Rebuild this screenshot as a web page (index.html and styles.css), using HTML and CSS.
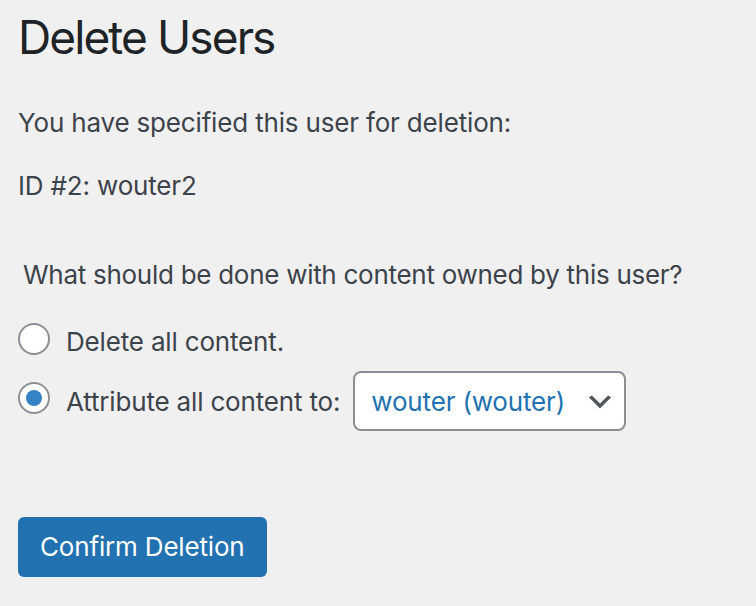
FILE: index.html
```html
<!DOCTYPE html>
<html lang="en">
<head>
<meta charset="utf-8">
<title>Delete Users</title>
<link rel="stylesheet" href="styles.css">
</head>
<body>
<div class="wrap">
  <h1 class="title">Delete Users</h1>
  <p class="intro">You have specified this user for deletion:</p>
  <p class="user-id">ID #2: wouter2</p>
  <fieldset class="options">
    <legend class="question">What should be done with content owned by this user?</legend>
    <div class="option">
      <span class="radio"></span>
      <span class="option-label">Delete all content.</span>
    </div>
    <div class="option option-select">
      <span class="radio radio-checked"></span>
      <span class="option-label">Attribute all content to:</span>
      <span class="select-wrap">
        <span class="select">wouter (wouter)</span>
        <svg class="chevron" viewBox="0 0 20 20" width="32" height="32" aria-hidden="true"><path d="M5 6l5 5 5-5 2 1-7 7-7-7 2-1z" fill="#50575e"/></svg>
      </span>
    </div>
  </fieldset>
  <button class="button-primary" type="button">Confirm Deletion</button>
</div>
</body>
</html>
```
FILE: styles.css
```css
html, body {
  margin: 0;
  padding: 0;
  background: #f0f0f1;
}
body {
  font-family: Inter, "Liberation Sans", Arial, sans-serif;
  font-size: 26px;
  line-height: 39px;
  letter-spacing: -0.17px;
  color: #3c434a;
}
.wrap {
  padding: 7px 18px 0 18px;
}
.title {
  margin: 0;
  font-size: 46px;
  line-height: 60px;
  font-weight: 400;
  letter-spacing: -1.9px;
  color: #1d2327;
}
.intro {
  margin: 36px 0 0 0;
}
.user-id {
  margin: 24px 0 0 0;
}
.options {
  margin: 50px 0 0 0;
  padding: 0;
  border: 0;
  min-width: 0;
}
.question {
  padding: 0 5px;
  margin-bottom: 28px;
  letter-spacing: -0.28px;
}
.option {
  display: flex;
  align-items: center;
  height: 39px;
}
.option-select {
  height: 60px;
  margin-top: 10px;
}
.radio {
  box-sizing: border-box;
  width: 32px;
  height: 32px;
  border: 2px solid #8c8f94;
  border-radius: 50%;
  background: #fff;
  margin: -6px 16px 0 0;
  display: flex;
  align-items: center;
  justify-content: center;
  flex: none;
}
.radio-checked::before {
  content: "";
  width: 16px;
  height: 16px;
  border-radius: 50%;
  background: #3582c4;
}
.select-wrap {
  position: relative;
  margin-left: 13px;
  display: block;
}
.select {
  box-sizing: border-box;
  display: flex;
  align-items: center;
  height: 60px;
  width: 273px;
  padding: 0 48px 0 16px;
  border: 2px solid #8c8f94;
  border-radius: 8px;
  background: #fff;
  color: #2271b1;
}
.chevron {
  position: absolute;
  right: 10px;
  top: 15px;
}
.button-primary {
  display: block;
  margin-top: 86px;
  height: 60px;
  padding: 0 22px;
  border: 0;
  border-radius: 6px;
  background: #2271b1;
  color: #fff;
  font-family: inherit;
  font-size: 26px;
  letter-spacing: -0.17px;
  line-height: 60px;
}
```
